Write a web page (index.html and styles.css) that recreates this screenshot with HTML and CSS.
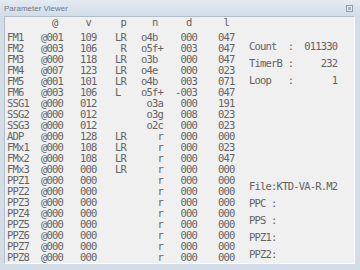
FILE: index.html
```html
<!DOCTYPE html>
<html lang="en">
<head>
    <meta charset="UTF-8">
    <title>Parameter Viewer</title>
    <link rel="stylesheet" href="styles.css">
</head>
<body>
    <div class="window">
        <div class="titlebar">
            <span class="title">Parameter Viewer</span>
            <span class="close"></span>
        </div>
        <div class="client">
            <!-- parts table -->
            <div class="table">
                <div class="row head"><span></span><span>  @</span><span> v</span><span> p</span><span>  n</span><span>  d</span><span> l</span></div>
                <div class="row"><span>FM1</span><span>@001</span><span>109</span><span>LR</span><span>o4b</span><span> 000</span><span>047</span></div>
                <div class="row"><span>FM2</span><span>@003</span><span>106</span><span> R</span><span>o5f+</span><span> 003</span><span>047</span></div>
                <div class="row"><span>FM3</span><span>@000</span><span>118</span><span>LR</span><span>o3b</span><span> 000</span><span>047</span></div>
                <div class="row"><span>FM4</span><span>@007</span><span>123</span><span>LR</span><span>o4e</span><span> 000</span><span>023</span></div>
                <div class="row"><span>FM5</span><span>@001</span><span>101</span><span>LR</span><span>o4b</span><span> 003</span><span>071</span></div>
                <div class="row"><span>FM6</span><span>@003</span><span>106</span><span>L</span><span>o5f+</span><span>-003</span><span>047</span></div>
                <div class="row"><span>SSG1</span><span>@000</span><span>012</span><span></span><span> o3a</span><span> 000</span><span>191</span></div>
                <div class="row"><span>SSG2</span><span>@000</span><span>012</span><span></span><span> o3g</span><span> 008</span><span>023</span></div>
                <div class="row"><span>SSG3</span><span>@000</span><span>012</span><span></span><span> o2c</span><span> 000</span><span>023</span></div>
                <div class="row"><span>ADP</span><span>@000</span><span>128</span><span>LR</span><span>   r</span><span> 000</span><span>000</span></div>
                <div class="row"><span>FMx1</span><span>@000</span><span>108</span><span>LR</span><span>   r</span><span> 000</span><span>023</span></div>
                <div class="row"><span>FMx2</span><span>@000</span><span>108</span><span>LR</span><span>   r</span><span> 000</span><span>047</span></div>
                <div class="row"><span>FMx3</span><span>@000</span><span>000</span><span>LR</span><span>   r</span><span> 000</span><span>000</span></div>
                <div class="row"><span>PPZ1</span><span>@000</span><span>000</span><span></span><span>   r</span><span> 000</span><span>000</span></div>
                <div class="row"><span>PPZ2</span><span>@000</span><span>000</span><span></span><span>   r</span><span> 000</span><span>000</span></div>
                <div class="row"><span>PPZ3</span><span>@000</span><span>000</span><span></span><span>   r</span><span> 000</span><span>000</span></div>
                <div class="row"><span>PPZ4</span><span>@000</span><span>000</span><span></span><span>   r</span><span> 000</span><span>000</span></div>
                <div class="row"><span>PPZ5</span><span>@000</span><span>000</span><span></span><span>   r</span><span> 000</span><span>000</span></div>
                <div class="row"><span>PPZ6</span><span>@000</span><span>000</span><span></span><span>   r</span><span> 000</span><span>000</span></div>
                <div class="row"><span>PPZ7</span><span>@000</span><span>000</span><span></span><span>   r</span><span> 000</span><span>000</span></div>
                <div class="row"><span>PPZ8</span><span>@000</span><span>000</span><span></span><span>   r</span><span> 000</span><span>000</span></div>
            </div>

            <!-- status -->
            <div class="side">
                <div class="info">
                    <div class="line">Count  :  011330</div>
                    <div class="line">TimerB :     232</div>
                    <div class="line">Loop   :       1</div>
                </div>
                <div class="info">
                    <div class="line">File:KTD-VA-R.M2</div>
                    <div class="line">PPC :</div>
                    <div class="line">PPS :</div>
                    <div class="line">PPZ1:</div>
                    <div class="line">PPZ2:</div>
                </div>
            </div>
        </div>
    </div>
</body>
</html>
```

FILE: styles.css
```css
body {
    margin: 0;
    font-family: "DejaVu Sans Mono", monospace;
}
.window {
    width: 360px;
    height: 270px;
    background: #d3dde8;
    display: flex;
    flex-direction: column;
}
.titlebar {
    height: 16px;
    display: flex;
    align-items: center;
    justify-content: space-between;
    padding: 0 7px 0 4px;
    background: linear-gradient(#e3eaf2, #d2dce8);
}
.title {
    font-family: "Liberation Sans", Arial, sans-serif;
    font-size: 8px;
    color: #6f7c8a;
}
.close {
    width: 7px;
    height: 7px;
    box-sizing: border-box;
    border: 1px solid #939ca6;
    background: #a9b1ba;
    box-shadow: inset 0 0 0 1px #e4e9ee;
}
.client {
    flex: 1;
    margin: 0 5px 6px 4px;
    border-left: 1px solid #b3bdc8;
    border-top: 1px solid #b3bdc8;
    border-right: 1px solid #fafbfc;
    border-bottom: 1px solid #fafbfc;
    background: #f0f0f0;
    display: flex;
    color: #636363;
    font-size: 10.5px;
    letter-spacing: -0.8px;
}
.table {
    width: 242px;
    padding-left: 2px;
}
.row {
    display: grid;
    grid-template-columns: 34px 39px 35px 26px 34px 43px auto;
    height: 11px;
    line-height: 11px;
    white-space: pre;
}
.row.head {
    margin-bottom: 4px;
}
.side {
    flex: 1;
    display: flex;
    flex-direction: column;
    justify-content: space-between;
    padding: 21px 0 0 0;
}
.line {
    height: 17px;
    line-height: 17px;
    white-space: pre;
}
```
